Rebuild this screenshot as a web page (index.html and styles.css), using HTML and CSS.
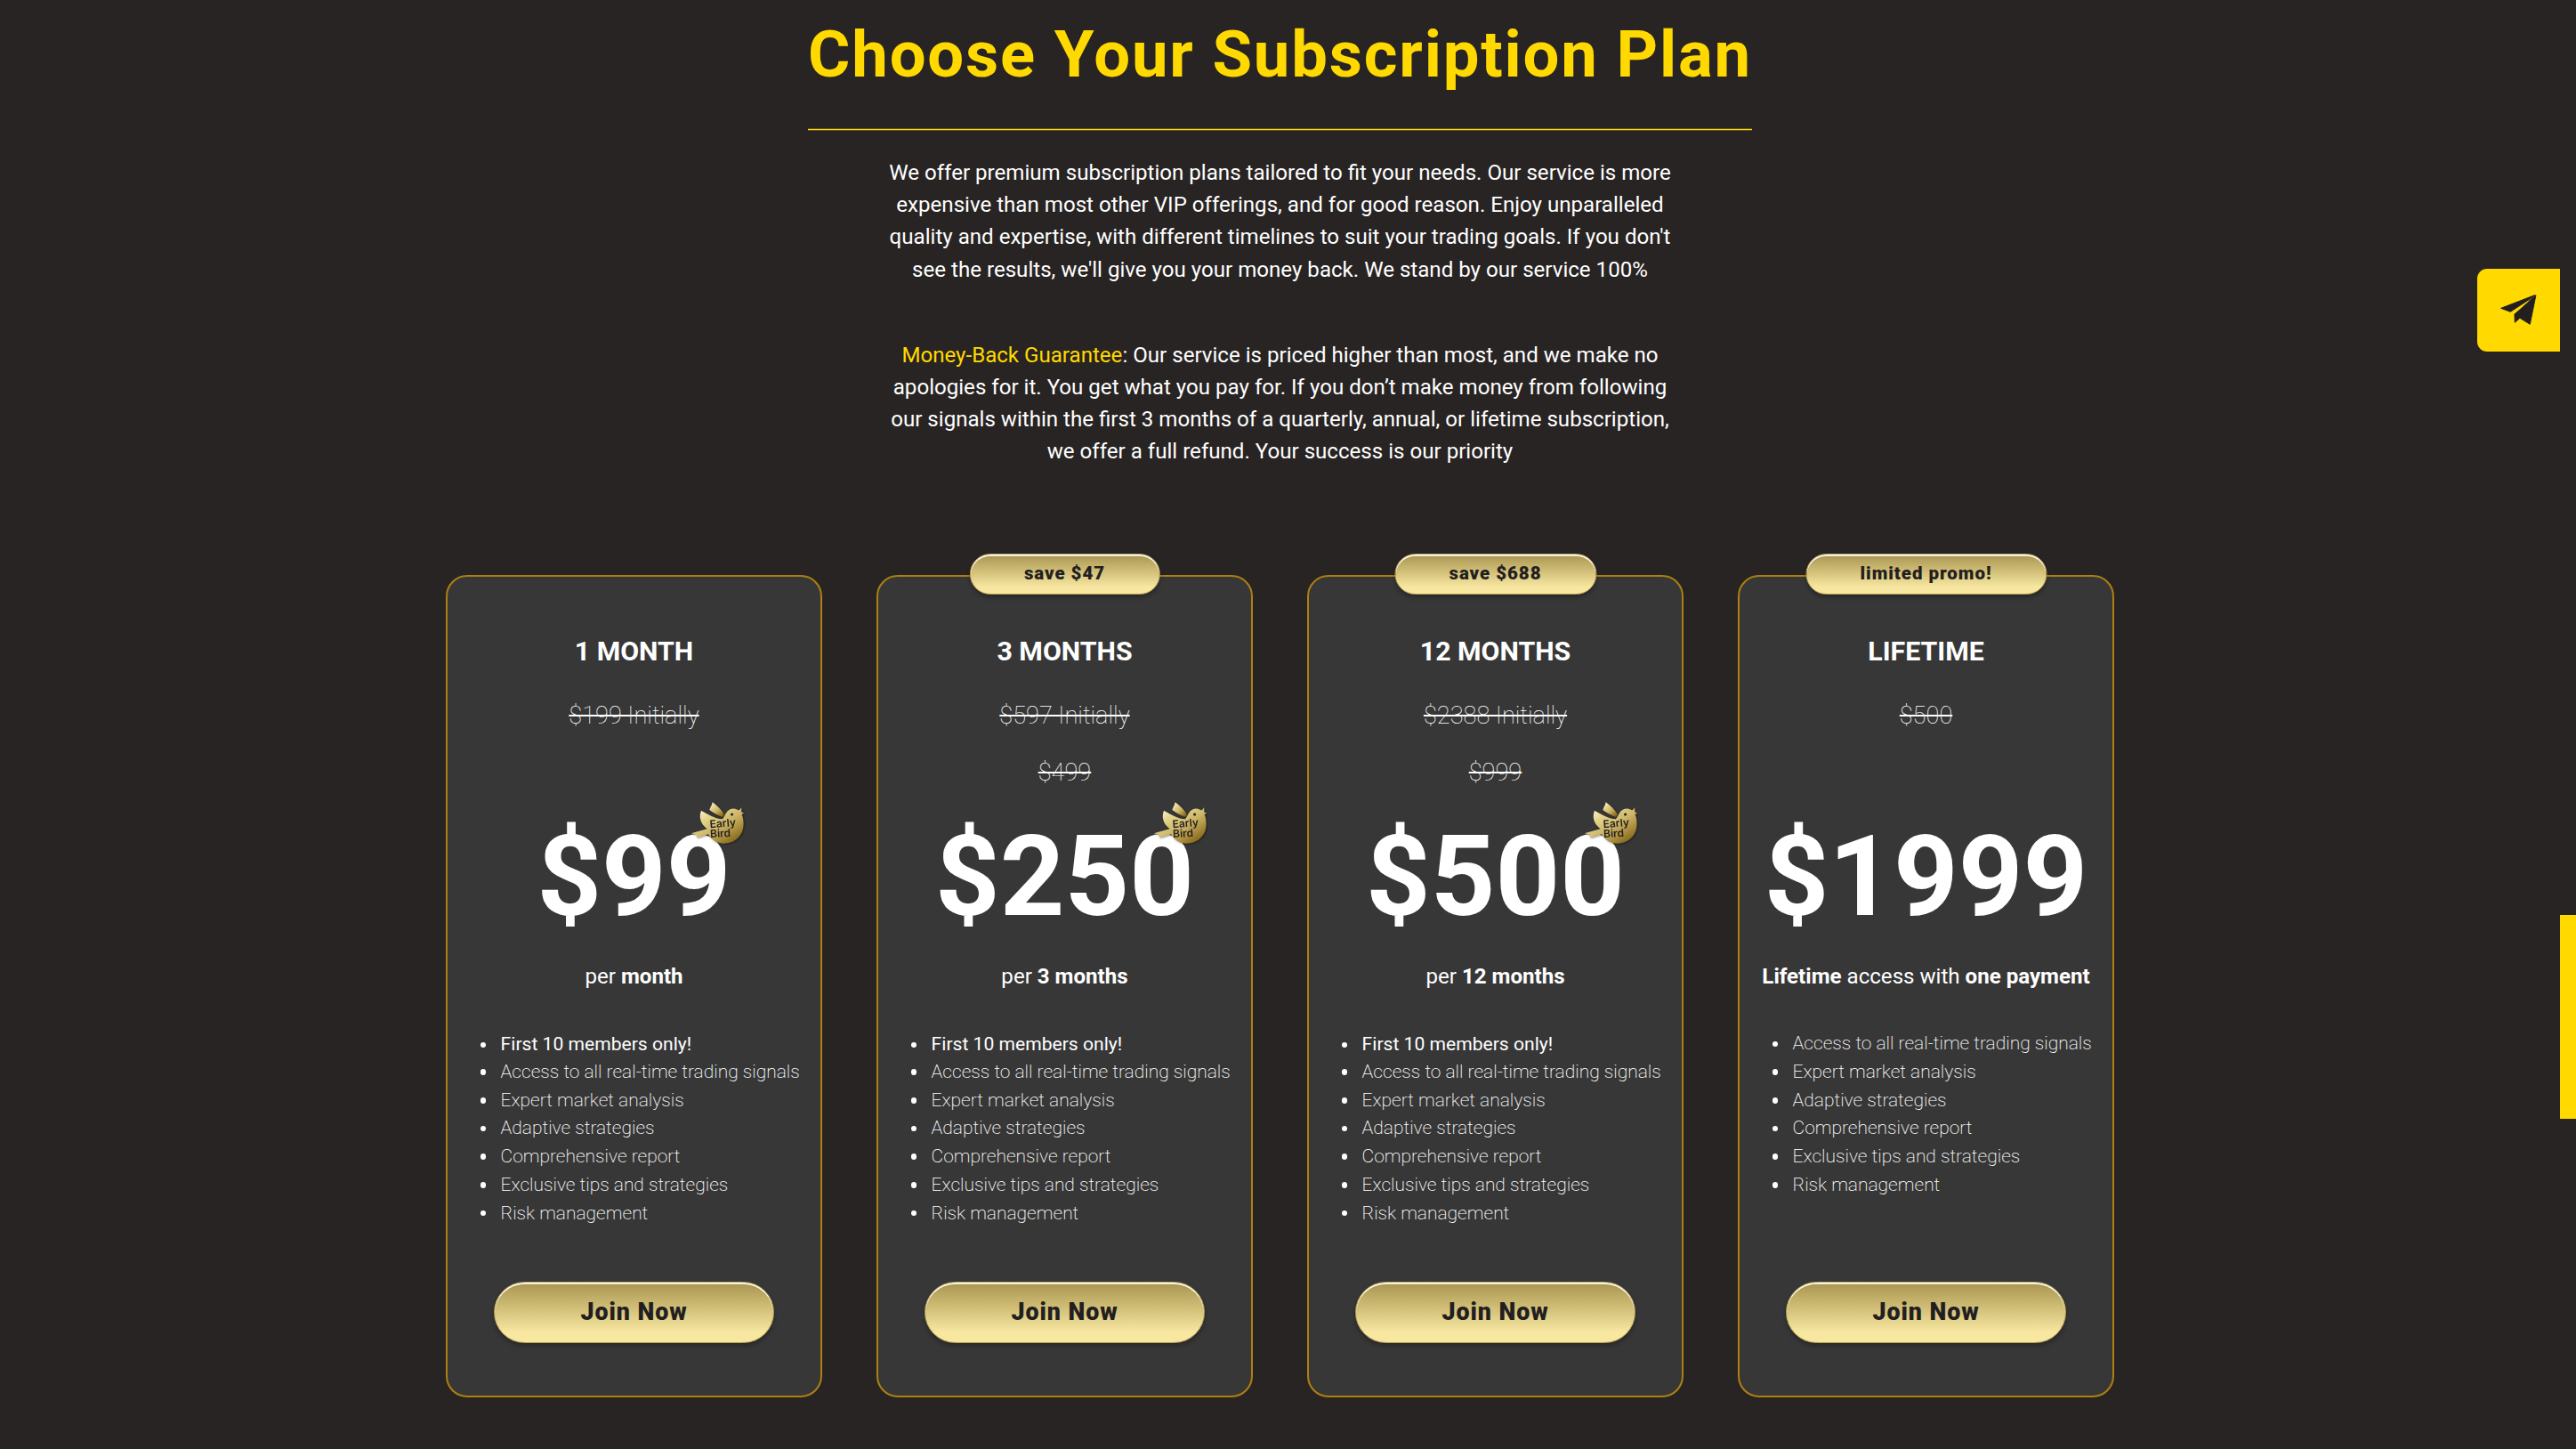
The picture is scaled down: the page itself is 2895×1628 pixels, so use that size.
FILE: index.html
```
<!DOCTYPE html>
<html lang="en">
<head>
<meta charset="utf-8">
<title>Choose Your Subscription Plan</title>
<link rel="stylesheet" href="styles.css">
</head>
<body>
<svg class="defs" width="0" height="0" aria-hidden="true">
  <defs>
    <linearGradient id="gold" x1="0.1" y1="0.1" x2="0.9" y2="0.95">
      <stop offset="0" stop-color="#fbf4d4"/>
      <stop offset="0.25" stop-color="#e3d389"/>
      <stop offset="0.52" stop-color="#cdb668"/>
      <stop offset="0.74" stop-color="#ac9040"/>
      <stop offset="1" stop-color="#7c5f12"/>
    </linearGradient>
    <symbol id="bird" viewBox="18 26 182 146">
      <path fill="url(#gold)" d="M92 27C91 37 84 45 82 53C94 62 108 70 123 76Q127 77 129 74L132 68C121 50 107 38 92 27Z"/>
      <path fill="url(#gold)" d="M54 55C45 78 52 101 74 117L20 132L38 136L39 147L78 135C92 160 115 168 138 166C175 162 198 135 197 100C197 87 195 76 191 68L199 64L190 60L190 44C187 50 184 53 180 54C165 44 150 48 142 58C136 66 132 76 126 84C98 82 76 66 54 55Z"/>
      <circle cx="158" cy="68" r="4.6" fill="#231f20"/>
      <text class="bird-text" x="84" y="114" transform="rotate(-5 86 112)">Early</text>
      <text class="bird-text" x="85" y="146" transform="rotate(-3 86 145)">Bird</text>
    </symbol>
  </defs>
</svg>

<main class="page">
  <h1 class="heading">Choose Your Subscription Plan</h1>
  <p class="intro">We offer premium subscription plans tailored to fit your needs. Our service is more expensive than most other VIP offerings, and for good reason. Enjoy unparalleled quality and expertise, with different timelines to suit your trading goals. If you don't see the results, we'll give you your money back. We stand by our service 100%</p>
  <p class="intro guarantee"><span class="accent">Money-Back Guarantee</span>: Our service is priced higher than most, and we make no apologies for it. You get what you pay for. If you don’t make money from following our signals within the first 3 months of a quarterly, annual, or lifetime subscription, we offer a full refund. Your success is our priority</p>

  <section class="plans">
    <article class="plan">
      <h2 class="plan-name">1 MONTH</h2>
      <div class="old-prices"><s>$199 Initially</s></div>
      <div class="price"><span class="amount">$99<svg class="bird"><use href="#bird"/></svg></span></div>
      <p class="period">per <b>month</b></p>
      <ul class="features">
        <li class="hot">First 10 members only!</li>
        <li>Access to all real-time trading signals</li>
        <li>Expert market analysis</li>
        <li>Adaptive strategies</li>
        <li>Comprehensive report</li>
        <li>Exclusive tips and strategies</li>
        <li>Risk management</li>
      </ul>
      <button class="gold join">Join Now</button>
    </article>

    <article class="plan">
      <span class="gold badge">save $47</span>
      <h2 class="plan-name">3 MONTHS</h2>
      <div class="old-prices"><s>$597 Initially</s><s>$499</s></div>
      <div class="price"><span class="amount">$250<svg class="bird"><use href="#bird"/></svg></span></div>
      <p class="period">per <b>3 months</b></p>
      <ul class="features">
        <li class="hot">First 10 members only!</li>
        <li>Access to all real-time trading signals</li>
        <li>Expert market analysis</li>
        <li>Adaptive strategies</li>
        <li>Comprehensive report</li>
        <li>Exclusive tips and strategies</li>
        <li>Risk management</li>
      </ul>
      <button class="gold join">Join Now</button>
    </article>

    <article class="plan">
      <span class="gold badge">save $688</span>
      <h2 class="plan-name">12 MONTHS</h2>
      <div class="old-prices"><s>$2388 Initially</s><s>$999</s></div>
      <div class="price"><span class="amount">$500<svg class="bird"><use href="#bird"/></svg></span></div>
      <p class="period">per <b>12 months</b></p>
      <ul class="features">
        <li class="hot">First 10 members only!</li>
        <li>Access to all real-time trading signals</li>
        <li>Expert market analysis</li>
        <li>Adaptive strategies</li>
        <li>Comprehensive report</li>
        <li>Exclusive tips and strategies</li>
        <li>Risk management</li>
      </ul>
      <button class="gold join">Join Now</button>
    </article>

    <article class="plan">
      <span class="gold badge">limited promo!</span>
      <h2 class="plan-name">LIFETIME</h2>
      <div class="old-prices"><s>$500</s></div>
      <div class="price"><span class="amount">$1999</span></div>
      <p class="period"><b>Lifetime</b> access with <b>one payment</b></p>
      <ul class="features">
        <li>Access to all real-time trading signals</li>
        <li>Expert market analysis</li>
        <li>Adaptive strategies</li>
        <li>Comprehensive report</li>
        <li>Exclusive tips and strategies</li>
        <li>Risk management</li>
      </ul>
      <button class="gold join">Join Now</button>
    </article>
  </section>
</main>

<a class="telegram" aria-label="Telegram">
  <svg viewBox="146 150 128 108" width="42.6" height="36">
    <g fill="#231f20" stroke="#231f20" stroke-width="3" stroke-linejoin="round">
      <path d="M151 199L266 154.500L250 167L183 211Z"/>
      <path d="M269 155L249 253L215 232L198 247L197 219L249 172Z"/>
    </g>
    <path d="M188 212L198 216L249 172Z" fill="#ffd900"/>
  </svg>
</a>
<div class="scroll-thumb"></div>
</body>
</html>
```
FILE: styles.css
```
* { box-sizing: border-box; margin: 0; padding: 0; }

body {
  width: 2895px;
  height: 1628px;
  overflow: hidden;
  position: relative;
  background: #282423;
  color: #fff;
  font-family: Roboto, sans-serif;
  font-size: 24.1px;
  line-height: 36.2px;
}

.defs { position: absolute; }

.page {
  width: 2877px;
  padding-top: 22px;
  display: flex;
  flex-direction: column;
  align-items: center;
}

.heading {
  padding-bottom: 45px;
  color: #ffd900;
  font-size: 72.45px;
  font-weight: 700;
  letter-spacing: 1.81px;
  line-height: 80px;
  background: linear-gradient(rgba(255, 217, 0, .25) 1px, #ffd900 1px 2px, rgba(255, 217, 0, .25) 2px) bottom / 100% 3px no-repeat;
}

.intro {
  width: 888px;
  margin-top: 29px;
  text-align: center;
}

.guarantee { margin-top: 60px; }
.accent { color: #ffd900; }

.plans {
  display: grid;
  grid-template-columns: repeat(4, 423px);
  column-gap: 61px;
  margin-top: 120.6px;
}

.plan {
  position: relative;
  height: 924px;
  padding: 63.5px 0 59.5px;
  display: flex;
  flex-direction: column;
  align-items: center;
  background: #373737;
  border: 2px solid #ad8012;
  border-radius: 24px;
}

.plan-name {
  font-size: 30.3px;
  font-weight: 700;
  line-height: 40px;
}

.old-prices {
  height: 128.6px;
  margin-top: 20px;
  display: flex;
  flex-direction: column;
  align-items: center;
  font-size: 27.2px;
  font-weight: 100;
  line-height: 64.3px;
}

.price {
  margin-top: 11px;
  font-size: 126.8px;
  font-weight: 700;
  line-height: 148px;
}

.amount { display: block; position: relative; }

.bird {
  position: absolute;
  top: -10px;
  right: -15px;
  width: 60.6px;
  height: 48.6px;
  filter: drop-shadow(1px 1px 1px rgba(0, 0, 0, .4));
}

.bird-text {
  font-family: Inter, sans-serif;
  font-size: 36px;
  font-weight: 600;
  fill: #231f20;
}

.period { margin-top: 19.4px; }

.features {
  align-self: flex-start;
  margin-top: 42.4px;
  padding-left: 60px;
  font-size: 20.95px;
  font-weight: 200;
  line-height: 31.7px;
  list-style: none;
}

.features li::before {
  content: "";
  display: inline-block;
  width: 6.6px;
  height: 6.6px;
  margin: 0 16.4px 3.2px -23.4px;
  border-radius: 50%;
  background: #fff;
}

.features .hot {
  font-size: 21.1px;
  font-weight: 400;
}

.gold {
  color: #231f20;
  font-family: inherit;
  font-weight: 900;
  border: 1.8px solid #b8a052;
  border-radius: 35px;
  background: linear-gradient(#af9b55 8%, #f7e7a0 82%) border-box;
  box-shadow: inset 0 1.8px 0 #fff, 0 3px 5px rgba(0, 0, 0, .3);
}

.join {
  width: 315px;
  height: 69px;
  margin-top: auto;
  font-size: 26.8px;
  letter-spacing: .95px;
}

.badge {
  position: absolute;
  top: -26px;
  left: 50%;
  height: 46px;
  padding: 0 60.5px;
  transform: translateX(-50%);
  font-size: 20.5px;
  letter-spacing: .95px;
  line-height: 42px;
  white-space: nowrap;
}

.telegram {
  position: absolute;
  top: 301.5px;
  right: 18px;
  width: 93.5px;
  height: 93.5px;
  display: flex;
  align-items: center;
  justify-content: center;
  background: #ffd900;
  border-radius: 11px 0 0 11px;
}

.scroll-thumb {
  position: absolute;
  top: 1028px;
  right: 0;
  width: 18px;
  height: 229px;
  background: #ffd900;
}
```
